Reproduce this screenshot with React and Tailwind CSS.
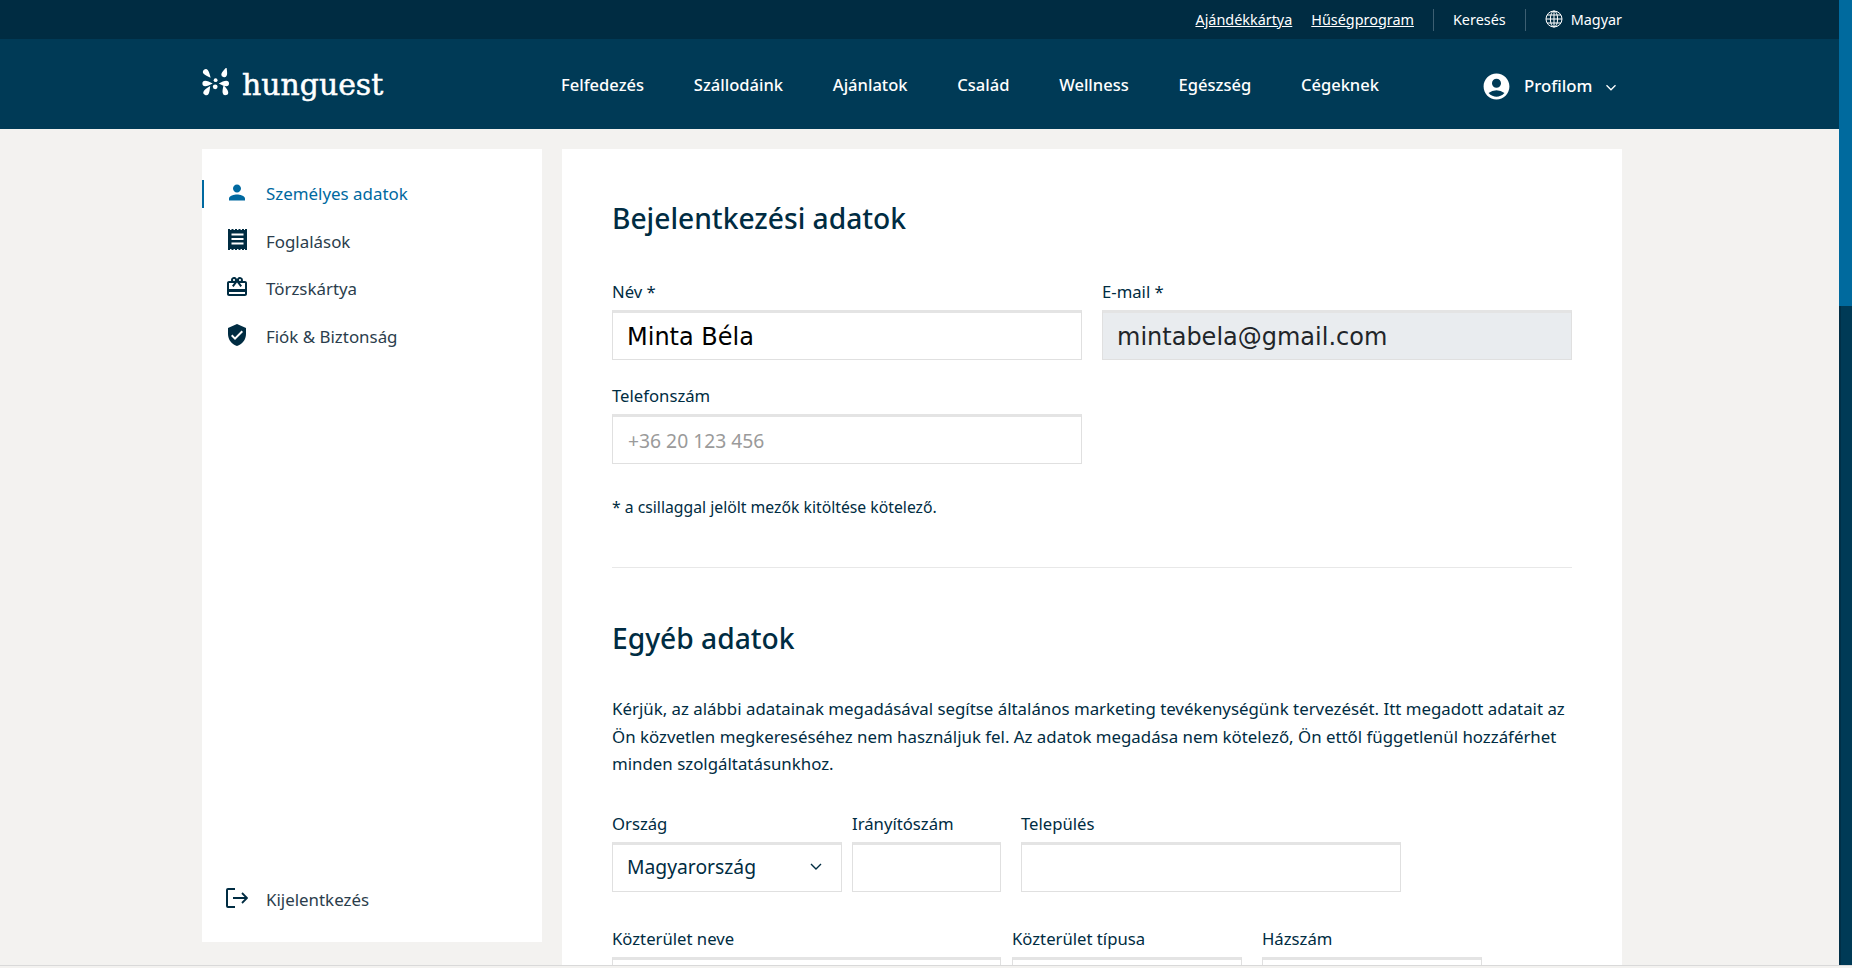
import React from "react";
import { MdPerson, MdCardGiftcard, MdVerifiedUser, MdAccountCircle } from "react-icons/md";

const sans = "font-['Noto_Sans','Open_Sans',sans-serif]";

const tear = "M0 -7.5 C1.4 -4.6 2.8 -2 2.8 0 A2.8 2.8 0 1 1 -2.8 0 C-2.8 -2 -1.4 -4.6 0 -7.5 Z";

function Logo() {
  return (
    <svg width="28" height="33" viewBox="0 0 28 33" fill="#fff" className="shrink-0">
      <path d={tear} transform="translate(3.8 4) rotate(140)" />
      <path d={tear} transform="translate(22.2 6.4) rotate(18)" />
      <path d={tear} transform="translate(3.2 15.5) rotate(90)" />
      <path d={tear} transform="translate(24.2 15.5) rotate(-90)" />
      <path d={tear} transform="translate(4.2 24.4) rotate(32)" />
      <path d={tear} transform="translate(23.4 24.4) rotate(-14)" />
      <circle cx="13.6" cy="12.2" r="1.9" />
      <circle cx="13.2" cy="18.8" r="2.4" />
    </svg>
  );
}

function ReceiptIcon() {
  return (
    <svg width="19" height="21" viewBox="0 0 19 21" fill="#002c42">
      <path d="M0 0h2v1h1.5V0h2v1H7V0h2v1h1.5V0h2v1H14V0h2v1h1V0h2v21h-2v-1h-1v1h-2v-1h-1.5v1h-2v-1H9v1H7v-1H5.500v1h-2v-1H2v1H0Z" />
      <rect x="3.5" y="4.500" width="12" height="2" fill="#fff" />
      <rect x="3.5" y="9" width="12" height="2" fill="#fff" />
      <rect x="3.5" y="13.500" width="12" height="2" fill="#fff" />
    </svg>
  );
}

function LogoutIcon() {
  return (
    <svg width="22" height="20" viewBox="0 0 22 20" fill="none" stroke="#002c42" strokeWidth="2">
      <path d="M9 1H2a1 1 0 0 0-1 1v16a1 1 0 0 0 1 1h7" />
      <path d="M7 10h14M16 5l5 5-5 5" strokeWidth="1.8" />
    </svg>
  );
}

function GlobeIcon() {
  return (
    <svg width="18" height="18" viewBox="0 0 18 18" fill="none" stroke="#fff" strokeWidth="1">
      <circle cx="9" cy="9" r="8" />
      <ellipse cx="9" cy="9" rx="3.6" ry="8" />
      <path d="M1 9h16M2 5h14M2 13h14M9 1v16" />
    </svg>
  );
}

function Chevron({ className, color = "#fff" }) {
  return (
    <svg width="12" height="8" viewBox="0 0 12 8" fill="none" stroke={color} strokeWidth="1.4" className={className}>
      <path d="M1 1l5 5 5-5" />
    </svg>
  );
}

function Field({ label, w, children, className = "" }) {
  return (
    <div className={`flex flex-col ${w} ${className}`}>
      <label className="h-[24px] text-[16.7px] leading-[24px] text-[#002c42]">{label}</label>
      {children}
    </div>
  );
}

const boxCls =
  "mt-[6px] h-[50px] w-full border border-[#e0e0e0] border-t-[3px] border-t-[#e4e4e4] outline-none";

function NavItem({ icon, children, active }) {
  return (
    <div
      className={`flex h-[28px] items-center border-l-2 pl-[21px] ${active ? "border-[#0069a0] text-[#0069a0]" : "border-transparent text-[#2b3d4c]"}`}
    >
      <span className="flex w-[24px] -translate-y-[2px] justify-center">{icon}</span>
      <span className="ml-[17px] text-[16.9px] leading-[28px]">{children}</span>
    </div>
  );
}

export default function App() {
  return (
    <div className={`flex h-[968px] w-full flex-col overflow-hidden bg-[#f3f2f0] ${sans}`}>
      <div className="flex min-h-0 flex-1">
        <div className="flex min-w-0 flex-1 flex-col">
          <div className="flex h-[39px] shrink-0 items-center justify-end bg-[#002c42] pr-[217px] text-[14.4px] text-white">
            <a className="underline">Ajándékkártya</a>
            <a className="ml-[19px] underline">Hűségprogram</a>
            <span className="ml-[19px] h-[22px] w-px bg-[#3d5f72]" />
            <span className="ml-[19px]">Keresés</span>
            <span className="ml-[19px] h-[22px] w-px bg-[#3d5f72]" />
            <span className="ml-[19px] flex items-center gap-[8px]">
              <GlobeIcon />
              Magyar
            </span>
          </div>
          <div className="flex h-[90px] shrink-0 items-center bg-[#003a56] pl-[202px] text-white">
            <div className="flex w-[359px] items-center gap-[12px]">
              <Logo />
              <span className="translate-y-[1px] font-['DejaVu_Serif',serif] text-[29.9px] leading-none [-webkit-text-stroke:0.5px_white]">hunguest</span>
            </div>
            <nav className="flex w-[818px] translate-y-[1px] justify-between text-[16.55px] font-medium">
              <a>Felfedezés</a>
              <a>Szállodáink</a>
              <a>Ajánlatok</a>
              <a>Család</a>
              <a>Wellness</a>
              <a>Egészség</a>
              <a>Cégeknek</a>
            </nav>
            <div className="ml-[102px] flex translate-y-[2px] items-center text-[16.8px] font-medium">
              <MdAccountCircle size={31} color="#fff" />
              <span className="ml-[12px]">Profilom</span>
              <Chevron className="ml-[13px] mt-[3px] scale-90" />
            </div>
          </div>
          <div className="flex min-h-0 flex-1 items-start gap-[20px] overflow-hidden pl-[202px] pt-[20px]">
            <aside className="flex h-[793px] w-[340px] shrink-0 flex-col bg-white pb-[28px] pt-[31px]">
              <div className="flex flex-col gap-[19.6px]">
                <NavItem active icon={<MdPerson size={27} color="#0069a0" />}>Személyes adatok</NavItem>
                <NavItem icon={<ReceiptIcon />}>Foglalások</NavItem>
                <NavItem icon={<MdCardGiftcard size={26} color="#002c42" />}>Törzskártya</NavItem>
                <NavItem icon={<MdVerifiedUser size={26} color="#002c42" />}>Fiók &amp; Biztonság</NavItem>
              </div>
              <div className="mt-auto">
                <NavItem icon={<LogoutIcon />}>Kijelentkezés</NavItem>
              </div>
            </aside>
            <main className="w-[1060px] shrink-0 bg-white px-[50px] pb-[40px] pt-[48px] text-[#002c42]">
              <h2 className="text-[28.2px] font-medium leading-[42px]">Bejelentkezési adatok</h2>
              <div className="mt-[41px] flex gap-[20px]">
                <Field label="Név *" w="w-[470px]">
                  <input readOnly value="Minta Béla" className={`${boxCls} bg-white px-[14px] pt-[2px] font-['DejaVu_Sans',sans-serif] text-[24px] text-black`} />
                </Field>
                <Field label="E-mail *" w="w-[470px]">
                  <input readOnly value="mintabela@gmail.com" className={`${boxCls} bg-[#e9ecef] px-[14px] pt-[2px] font-['DejaVu_Sans',sans-serif] text-[24px] text-[#212529]`} />
                </Field>
              </div>
              <Field label="Telefonszám" w="w-[470px]" className="mt-[24px]">
                <input readOnly placeholder="+36 20 123 456" className={`${boxCls} bg-white px-[15px] text-[19.3px] placeholder:text-[#9a9a9a]`} />
              </Field>
              <p className="mt-[31px] text-[15.75px] leading-[24px]">* a csillaggal jelölt mezők kitöltése kötelező.</p>
              <hr className="mt-[48px] border-[#e8e8e8]" />
              <h2 className="mt-[49px] text-[28.2px] font-medium leading-[42px]">Egyéb adatok</h2>
              <p className="mt-[36px] text-[16.85px] leading-[27.5px]">
                Kérjük, az alábbi adatainak megadásával segítse általános marketing tevékenységünk tervezését. Itt megadott adatait az Ön közvetlen megkereséséhez nem használjuk fel. Az adatok megadása nem kötelező, Ön ettől függetlenül hozzáférhet minden szolgáltatásunkhoz.
              </p>
              <div className="mt-[34px] flex">
                <Field label="Ország" w="w-[230px]">
                  <div className={`${boxCls} flex items-center justify-between pl-[14px] pr-[19px]`}>
                    <span className="text-[19.3px] text-[#002c42]">Magyarország</span>
                    <Chevron className="-translate-y-[1px]" color="#002c42" />
                  </div>
                </Field>
                <Field label="Irányítószám" w="w-[149px]" className="ml-[10px]">
                  <div className={boxCls} />
                </Field>
                <Field label="Település" w="w-[380px]" className="ml-[20px]">
                  <div className={boxCls} />
                </Field>
              </div>
              <div className="mt-[35px] flex">
                <Field label="Közterület neve" w="w-[389px]">
                  <div className={boxCls} />
                </Field>
                <Field label="Közterület típusa" w="w-[230px]" className="ml-[11px]">
                  <div className={boxCls} />
                </Field>
                <Field label="Házszám" w="w-[220px]" className="ml-[20px]">
                  <div className={boxCls} />
                </Field>
              </div>
            </main>
          </div>
        </div>
        <div className="flex w-[13px] shrink-0 flex-col">
          <div className="h-[306px] shrink-0 bg-[#006a9e]" />
          <div className="flex-1 border-l-2 border-[#012f47] bg-[#003a56]" />
        </div>
      </div>
      <div className="h-[3px] shrink-0 border-t border-[#d9d9d9] bg-[#f3f2f0]" />
    </div>
  );
}
